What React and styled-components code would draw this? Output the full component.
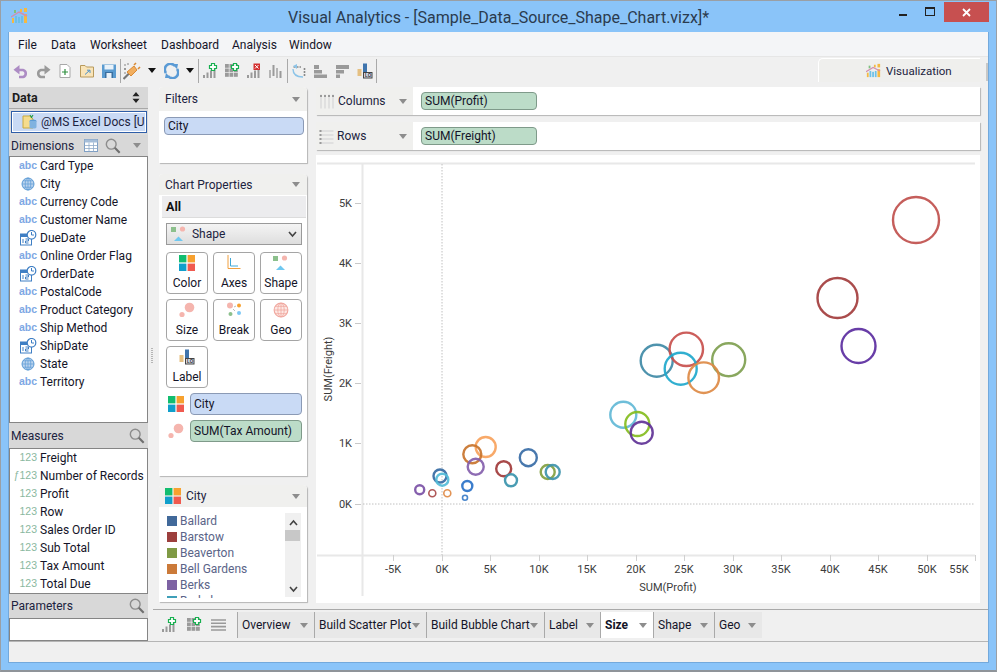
import React from 'react';
import styled, { createGlobalStyle } from 'styled-components';

const Global = createGlobalStyle`
  html, body { margin: 0; padding: 0; background: #8ac4f9; }
  * { box-sizing: border-box; }
`;
const FONT = `Roboto, "Liberation Sans", Arial, sans-serif`;

const Window = styled.div`
  width: 997px; height: 672px; overflow: hidden;
  display: flex; flex-direction: column;
  background: #8ac4f9; border: 1px solid #9a9fa5; border-bottom: 2px solid #8f9499;
  font: 12px ${FONT}; color: #1a1a1a;
`;
const TitleBar = styled.div`
  height: 31px; flex: none; display: grid; grid-template-columns: 140px 1fr 140px; align-items: start;
`;
const AppLogo = styled.div`
  padding: 6px 0 0 10px; height: 31px;
`;
const Title = styled.div`
  font: 16px/33px ${FONT}; color: #2b3b4e; text-align: center; 
`;
const WinButtons = styled.div`
  display: flex; justify-content: flex-end; align-items: flex-start; padding: 1px 7px 0 0;
`;
const WinBtn = styled.div`
  width: ${p => p.$w}px; height: 20px; display: flex; align-items: center; justify-content: center;
  background: ${p => p.$close ? '#c75050' : 'transparent'};
`;
const Inner = styled.div`
  flex: 1; margin: 0 7px 7px 7px; display: flex; flex-direction: column; min-height: 0;
  background: #f0f0f0; border: 1px solid #73a9dc; border-top: none;
`;
const MenuBar = styled.div`
  height: 24px; flex: none; background: #f4f5f7; display: flex; align-items: center; padding: 2px 0 0 9px;
  font-size: 12px; color: #141428;
`;
const MenuItem = styled.span`width: ${p => p.$w}px; flex: none;`;
const Toolbar = styled.div`
  height: 28px; flex: none; display: flex; align-items: center; background: #f0f0f0;
  border-top: 1px solid #e6e6e6; padding-left: 1px;
`;
const ToolSlot = styled.div`
  width: ${p => p.$w || 22}px; height: 22px; flex: none; display: flex; align-items: center; justify-content: center;
`;
const ToolSep = styled.div`
  width: 1px; height: 24px; background: #a9a9a9; flex: none;
`;
const VizTab = styled.div`
  margin-left: auto; width: 162px; height: 24px; align-self: flex-start; margin-top: 1px;
  background: #efefed; border-top: 1px solid #fff; border-left: 1px solid #fff; border-top-left-radius: 5px;
  display: flex; align-items: center; gap: 5px; padding: 0 0 0 47px; font-size: 11.5px; color: #1c2340;
`;
const VizEdge = styled.div`
  width: 2px; height: 18px; background: #c8c8c8; margin-left: 6px; flex: none; align-self: flex-start; margin-top: 6px;
`;
const Main = styled.div`
  flex: 1; display: flex; min-height: 0;
`;
const LeftPanel = styled.div`
  width: 139px; flex: none; display: flex; flex-direction: column; padding-top: 3px;
`;
const DataHeader = styled.div`
  height: 22px; background: #d8d8d8; border-bottom: 1px solid #a8a8a8; display: flex; align-items: center;
  justify-content: space-between; padding: 0 8px 0 3px; font-weight: bold; font-size: 12.5px; color: #1c1c1c;
`;
const SourceRow = styled.div`
  height: 27px; background: #dcdcdc; padding: 2px 1px 2px 2px;
`;
const SourceBox = styled.div`
  height: 22px; border: 1px solid #2f5ea8; background: #c9daf5; outline: 1px solid #fff; outline-offset: -2px;
  display: flex; align-items: center; gap: 3px; padding-left: 10px; font-size: 12px; white-space: nowrap; overflow: hidden; color: #1c2340;
`;
const SectionHeader = styled.div`
  height: ${p => p.$h}px; flex: none; background: #d8d8d8; display: flex; align-items: center; padding: 0 3px 0 2px; font-size: 12px; color: #1c2340;
`;
const SectionLabel = styled.span`flex: 1;`;
const SectionTools = styled.div`display: flex; align-items: center; gap: 7px;`;
const CaretGap = styled.div`margin-left: 5px; margin-right: 4px;`;
const FieldList = styled.div`
  height: ${p => p.$h}px; flex: none; background: #fff; border: 1px solid #858585;
`;
const FieldRow = styled.div`
  height: 18px; display: flex; align-items: center; font-size: 12px; color: #141428; white-space: nowrap;
`;
const FieldIconBox = styled.div`
  width: 30px; flex: none; display: flex; justify-content: flex-end; align-items: center; padding-right: 3px; height: 18px;
`;
const TypeText = styled.span`
  font: ${p => p.$bold ? 'bold' : 'normal'} 10.5px "Liberation Sans", sans-serif; color: ${p => p.$c}; position: relative; top: -1px;
`;
const GlobeGap = styled.div`margin-right: 2px;`;
const Grip = styled.div`
  width: 5px; flex: none; display: flex; align-items: center; justify-content: center;
`;
const GripDots = styled.div`
  width: 2px; height: 16px; margin-left: 3px; margin-bottom: 14px;
  background: repeating-linear-gradient(to bottom, #b5b5b5 0 1px, transparent 1px 2px);
`;
const RightArea = styled.div`
  flex: 1; display: flex; flex-direction: column; min-width: 0;
`;
const Workspace = styled.div`
  height: 522px; flex: none; display: flex; gap: 9px; padding: 3px 8px 0 6px;
`;
const MidCol = styled.div`
  width: 148px; flex: none; display: flex; flex-direction: column;
`;
const Card = styled.div`
  height: ${p => p.$h}px; flex: none; margin-bottom: ${p => p.$mb || 0}px; background: #fff; border-radius: 4px 4px 0 0;
  box-shadow: 1px 1px 1px #b5b5b5; overflow: hidden; display: flex; flex-direction: column;
`;
const CardHeader = styled.div`
  height: ${p => p.$h || 24}px; flex: none; background: #f0f0ee; display: flex; align-items: center; justify-content: space-between;
  padding: 0 7px 0 6px; font-size: 12px; color: #1c2340;
`;
const HeaderLeft = styled.div`display: flex; align-items: center; gap: 2px;`;
const Caret = styled.div`
  width: 0; height: 0; flex: none; border-left: 4px solid transparent; border-right: 4px solid transparent;
  border-top: 5px solid ${p => p.$c || '#8d8d8d'};
`;
const Pill = styled.div`
  height: ${p => p.$h || 18}px; width: ${p => p.$w ? p.$w + 'px' : 'auto'}; flex: ${p => p.$w ? 'none' : '1'};
  background: ${p => p.$green ? '#bcdcc8' : '#c9daf5'}; border: 1px solid ${p => p.$green ? '#7f9a8a' : '#8b9ab5'}; border-radius: 4px;
  display: flex; align-items: center; padding: 0 3px; font-size: 12px; color: #141428; white-space: nowrap;
`;
const FilterBody = styled.div`padding: 6px 3px 0 5px;`;
const AllRow = styled.div`
  height: 22px; margin: 1px 1px 0 3px; flex: none; background: #ececee; border-bottom: 1px solid #dcdcdc; display: flex; align-items: center; padding-left: 4px; font-weight: bold; font-size: 12.5px; color: #111;
`;
const ShapeSelect = styled.div`
  margin: 5px 5px 0 7px; height: 22px; flex: none; border: 1px solid #9a9a9a; background: linear-gradient(#f4f4f4, #dedede);
  display: flex; align-items: center; justify-content: space-between; padding: 0 4px 0 4px; font-size: 12px; color: #1c2340;
`;
const PropGrid = styled.div`
  display: grid; grid-template-columns: repeat(3, 42px); gap: 5px; margin: 7px 5px 0 7px;
`;
const PropButton = styled.div`
  height: 42px; border: 1px solid #a5a5a5; border-radius: 4px; background: #fff; display: flex; flex-direction: column; align-items: center;
  justify-content: space-between; padding: 2px 0 3px; font-size: 12px; line-height: 14px; color: #141428;
`;
const AssignRow = styled.div`
  display: flex; align-items: center; margin: 5px 5px 0 9px; gap: 6px;
`;
const Legend = styled.div`
  flex: 1; display: flex; padding: 6px 6px 0 8px; overflow: hidden; min-height: 0;
`;
const LegendList = styled.div`flex: 1; display: flex; flex-direction: column; overflow: hidden; height: 85px;`;
const LegendItem = styled.div`
  height: 16px; flex: none; display: flex; align-items: center; gap: 3px; font-size: 12px; color: #5a6488;
`;
const Swatch = styled.div`width: 10px; height: 10px; background: ${p => p.$c}; flex: none;`;
const ScrollBar = styled.div`
  width: 16px; height: 84px; flex: none; background: #f0f0f0; display: flex; flex-direction: column; align-items: center; justify-content: space-between; position: relative; padding: 6px 0 4px;
`;
const ScrollThumb = styled.div`
  position: absolute; top: 17px; left: 0; width: 15px; height: 11px; background: #c8c8c8;
`;
const ChartCol = styled.div`
  flex: 1; display: flex; flex-direction: column; min-width: 0;
`;
const Shelf = styled.div`
  height: 28px; flex: none; margin-bottom: ${p => p.$mb}px; background: #fff; display: flex; box-shadow: 1px 1px 1px #b5b5b5; border-radius: 3px 0 0 0;
`;
const ShelfLabel = styled.div`
  width: 97px; flex: none; background: #f0f0ee; display: flex; align-items: center; padding: 0 6px 0 3px; gap: 3px; font-size: 12px; color: #1c2340;
`;
const ShelfName = styled.span`flex: 1;`;
const ShelfBody = styled.div`flex: 1; padding: 5px 8px; display: flex; align-items: flex-start;`;
const ChartPanel = styled.div`
  height: 448px; flex: none; background: #fff;
`;
const ChartSvg = styled.svg`
  display: block; width: 664px; height: 448px;
`;
const AxisLabel = styled.text`
  font: 11px ${FONT}; fill: #3c3c3c;
`;
const TabBar = styled.div`
  height: 33px; flex: none; border-top: 1px solid #a9a9a9; margin-top: 3px; display: flex; align-items: flex-start; padding: 2px 0 0 8px;
`;
const TabIcons = styled.div`
  width: 76px; height: 26px; flex: none; display: flex; align-items: center; gap: 9px;
`;
const Tab = styled.div`
  width: ${p => p.$w}px; height: 26px; flex: none; display: flex; align-items: center; justify-content: space-between;
  background: ${p => p.$active ? '#fff' : '#e8e8e8'}; border-left: 1px solid #a9a9a9; padding: 0 6px 0 4px;
  font-size: 12px; font-weight: ${p => p.$active ? 'bold' : 'normal'}; color: #141428; white-space: nowrap;
`;
const StatusBar = styled.div`
  height: 21px; flex: none; background: #f0f0f0; border-top: 1px solid #b5b5b5;
`;

const Svg = ({ w = 16, h = 16, vb, children }) => (
  <svg width={w} height={h} viewBox={vb || `0 0 ${w} ${h}`} style={{ display: 'block', flex: 'none' }}>{children}</svg>
);

const AppIcon = ({ s = 17 }) => (
  <Svg w={s} h={s} vb="0 0 17 17">
    <rect x="1" y="11" width="2" height="5" fill="#f5b942" /><rect x="4" y="9" width="2" height="7" fill="#6cc0e8" />
    <rect x="7" y="10" width="2" height="6" fill="#6cc0e8" /><rect x="10" y="9" width="2" height="7" fill="#6cc0e8" />
    <rect x="13" y="7" width="3" height="9" fill="#f5b942" /><rect x="13" y="1" width="3" height="4" fill="#f5b942" />
    <rect x="9" y="2" width="2" height="3" fill="#f5b942" /><rect x="3" y="3" width="2" height="3" fill="#7fc27f" />
    <path d="M0 10 L8 5 L16 9" fill="none" stroke="#d08fb0" strokeWidth="1.4" />
  </Svg>
);
const Undo = ({ c }) => (
  <Svg><path d="M4 7 H10 A3.6 3.6 0 0 1 10 14 H6" fill="none" stroke={c} strokeWidth="2.6" /><path d="M6.5 2 V11.5 L0.5 6.8 Z" fill={c} /></Svg>
);
const Redo = ({ c }) => (
  <Svg><path d="M12 7 H6 A3.6 3.6 0 0 0 6 14 H10" fill="none" stroke={c} strokeWidth="2.6" /><path d="M9.5 2 V11.5 L15.5 6.8 Z" fill={c} /></Svg>
);
const NewDoc = () => (
  <Svg><path d="M3 1.5 H10 L13 4.5 V14.5 H3 Z" fill="#fff" stroke="#a8a8a8" /><path d="M8 6 V12 M5 9 H11" stroke="#2f8f3f" strokeWidth="1.2" /></Svg>
);
const Folder = () => (
  <Svg><path d="M1.5 2.5 H6 L7.5 4 H14.5 V14 H1.5 Z" fill="#f9e4b8" stroke="#b89a5c" /><path d="M6 11.5 L10.5 7.5 M8 7.2 H11 V10" fill="none" stroke="#4a90c8" strokeWidth="1" /></Svg>
);
const Save = () => (
  <Svg><rect x="1" y="1.5" width="14" height="13.5" fill="#5a9bd0" /><rect x="3.5" y="2" width="9" height="4.5" fill="#e9f2f9" /><rect x="4" y="9" width="8" height="6" fill="#3a6f9f" /><rect x="5.5" y="10" width="5" height="5" fill="#e9f2f9" /></Svg>
);
const Plug = () => (
  <Svg w={18} h={18}>
    <rect x="1" y="2" width="2" height="2" fill="#bbb" /><rect x="1" y="6" width="2" height="2" fill="#999" /><rect x="4" y="1" width="2" height="2" fill="#bbb" /><rect x="1" y="10" width="2" height="2" fill="#bbb" />
    <path d="M0.5 17 L6 11.5" stroke="#777" strokeWidth="2.2" />
    <path d="M4 10 L11 4 L14 8 L8 14 Z" fill="#f2ae5e" stroke="#d98a35" />
    <path d="M11 3 L13 1 M15 7 L17 5" stroke="#d98a35" strokeWidth="1.6" />
  </Svg>
);
const Refresh = () => (
  <Svg w={15} h={16}>
    <path d="M2 10 A5.5 5.5 0 0 1 11 3 M13 6 A5.5 5.5 0 0 1 4 13" fill="none" stroke="#5b9bd5" strokeWidth="2.6" />
    <path d="M8 1 L14 1 L13 6 Z M7 15 L1 15 L2 10 Z" fill="#5b9bd5" />
  </Svg>
);
const Bars = ({ c = '#9a9a9a' }) => (
  <>
    <rect x="1" y="12" width="2" height="3" fill={c} /><rect x="4.5" y="9.5" width="2" height="5.5" fill={c} />
    <rect x="8" y="7.5" width="2" height="7.5" fill={c} /><rect x="11.5" y="6" width="2" height="9" fill={c} />
  </>
);
const GreenPlus = ({ x = 7, y = 0 }) => (
  <path transform={`translate(${x} ${y})`} d="M2.5 0.5 H5.5 V2.5 H7.5 V5.5 H5.5 V7.5 H2.5 V5.5 H0.5 V2.5 H2.5 Z" fill="#fff" stroke="#18b050" strokeWidth="1.2" />
);
const ChartPlus = () => <Svg><Bars /><GreenPlus /></Svg>;
const GridCells = () => (
  <>
    {[1, 5.5, 10].flatMap(y => [1, 5.5, 10].map(x => <rect key={`${x}-${y}`} x={x} y={y} width="3.8" height="3.8" fill="#9a9a9a" />))}
  </>
);
const GridPlus = () => <Svg><GridCells /><GreenPlus /></Svg>;
const ChartX = () => (
  <Svg><Bars /><path d="M7.5 0.5 H14 V7 H7.5 Z" fill="#d43030" /><path d="M9 2 L12.5 5.5 M12.5 2 L9 5.5" stroke="#fff" strokeWidth="1" /></Svg>
);
const ChartGrey = () => (
  <Svg><rect x="1" y="7" width="2" height="8" fill="#b5b5b5" /><rect x="4.5" y="2" width="2" height="11" fill="#9a9a9a" /><rect x="8" y="5" width="2" height="10" fill="#b5b5b5" /><rect x="11.5" y="8" width="2" height="7" fill="#9a9a9a" /></Svg>
);
const Lasso = () => (
  <Svg><path d="M2.5 4 H10 M13.5 5 V14" stroke="#888" strokeWidth="1.6" strokeDasharray="2 1" fill="none" /><path d="M2 6 C2 12 6 14 12 14" stroke="#8cc4e8" strokeWidth="1.4" fill="none" /><path d="M2 3 L6 1 V6 Z" fill="#8cc4e8" /></Svg>
);
const HBarsA = () => (
  <Svg><rect x="1" y="2" width="5" height="4" fill="#9a9a9a" /><rect x="1" y="7" width="8" height="3.5" fill="#9a9a9a" /><rect x="1" y="11.5" width="13" height="3.5" fill="#9a9a9a" /></Svg>
);
const HBarsB = () => (
  <Svg><rect x="1" y="2" width="13" height="4" fill="#9a9a9a" /><rect x="1" y="7" width="8" height="3.5" fill="#9a9a9a" /><rect x="1" y="11.5" width="4" height="3.5" fill="#9a9a9a" /></Svg>
);
const LabelIcon = () => (
  <Svg w={16} h={16}>
    <rect x="0.5" y="6" width="4" height="7" fill="#e5c082" /><rect x="6" y="0.5" width="4" height="9" fill="#3f74ad" />
    <rect x="6.5" y="9.5" width="8.5" height="5.5" fill="#d4dbe6" stroke="#444" />
    <text x="8" y="14" fontSize="4.5" fontWeight="bold" fill="#333" fontFamily="Liberation Sans">LO</text>
  </Svg>
);
const Quad = () => (
  <Svg w={16} h={16}>
    <rect x="0" y="0" width="7.4" height="7.4" fill="#12bd6f" /><rect x="8.6" y="0" width="7.4" height="7.4" fill="#f7a12f" />
    <rect x="0" y="8.6" width="7.4" height="7.4" fill="#109fcb" /><rect x="8.6" y="8.6" width="7.4" height="7.4" fill="#f05a4f" />
  </Svg>
);
const ShapeIcon = () => (
  <Svg w={16} h={16}>
    <rect x="0" y="1" width="5" height="5" fill="#8cc08c" /><circle cx="11.5" cy="3" r="2.6" fill="#f5b5ae" /><path d="M3 15 L7.5 10.5 L12 15 Z" fill="#6fc8f0" />
  </Svg>
);
const SizeIcon = () => (
  <Svg w={16} h={16}>
    <circle cx="10.5" cy="5.5" r="4.8" fill="#f5b5ae" /><circle cx="3" cy="12.5" r="2.6" fill="#f5b5ae" />
  </Svg>
);
const BreakIcon = () => (
  <Svg w={17} h={16}>
    <circle cx="4" cy="3.5" r="3" fill="#f5b5ae" /><circle cx="13" cy="3.5" r="2" fill="#f7a12f" /><circle cx="4.5" cy="12" r="2" fill="#8cc08c" /><circle cx="13" cy="11" r="2" fill="#7cc8f5" />
    <path d="M8 5 L10 4 M7 7 L9 9" stroke="#aaa" strokeWidth="0.8" />
  </Svg>
);
const Globe = ({ c = '#5b9bd5', fill = '#bcd4ee', s = 14 }) => (
  <Svg w={s} h={s} vb="0 0 14 14">
    <circle cx="7" cy="7" r="6" fill={fill} stroke={c} strokeWidth="1" />
    <ellipse cx="7" cy="7" rx="2.8" ry="6" fill="none" stroke={c} strokeWidth="0.7" />
    <path d="M7 1 V13 M1 7 H13 M2 3.8 H12 M2 10.2 H12" stroke={c} strokeWidth="0.7" />
  </Svg>
);
const AxesIcon = () => (
  <Svg w={14} h={15}>
    <path d="M1 0 V13.5 H13.5" fill="none" stroke="#f0a040" strokeWidth="1" /><path d="M3.5 3 V11 H11" fill="none" stroke="#3fa9d8" strokeWidth="1" />
  </Svg>
);
const DateIcon = () => (
  <Svg w={17} h={16}>
    <rect x="0.5" y="4" width="11" height="11" fill="#fff" stroke="#3f7fc4" /><rect x="0.5" y="4" width="11" height="3" fill="#3f7fc4" />
    <path d="M3 9 V13 M5.5 9 H8.5 V11 H5.5 V13 H8.5" stroke="#3f7fc4" strokeWidth="1" fill="none" />
    <circle cx="11.5" cy="4.8" r="4.3" fill="#fff" stroke="#3f7fc4" strokeWidth="1.2" /><path d="M11.5 2 V5 H14" stroke="#3f7fc4" fill="none" />
  </Svg>
);
const SourceIcon = () => (
  <Svg w={16} h={16}>
    <path d="M1 2 H8 L11 5 V14 H1 Z" fill="#f5dc8c" stroke="#c9a93f" /><path d="M8 1 L10 4 M11 1 L9 4" stroke="#2a9d4a" strokeWidth="1.2" />
    <ellipse cx="11" cy="7" rx="3.5" ry="1.6" fill="#5b9bd5" /><path d="M7.5 7 V13 A3.5 1.6 0 0 0 14.5 13 V7" fill="#7fb2e0" />
  </Svg>
);
const Search = ({ s = 16 }) => (
  <Svg w={s} h={s} vb="0 0 18 18">
    <circle cx="7" cy="7" r="5.5" fill="none" stroke="#8d8d8d" strokeWidth="1.6" /><path d="M11 11 L16.5 16.5" stroke="#6f6f6f" strokeWidth="2.4" />
  </Svg>
);
const TableIcon = () => (
  <Svg w={14} h={13}>
    <rect x="0.5" y="0.5" width="13" height="12" fill="#fff" stroke="#7f9fc4" /><rect x="0.5" y="0.5" width="13" height="3" fill="#a5bdd8" />
    <path d="M0.5 6.5 H13.5 M0.5 9.5 H13.5 M5 3.5 V12.5 M9.5 3.5 V12.5" stroke="#8fa9c8" strokeWidth="0.8" />
  </Svg>
);
const SortArrows = () => (
  <Svg w={8} h={11}><path d="M4 0 L7.5 4.2 H0.5 Z M4 11 L7.5 6.8 H0.5 Z" fill="#222" /></Svg>
);
const ListLines = () => (
  <Svg w={15} h={12}><path d="M0 1 H15 M0 4.3 H15 M0 7.6 H15 M0 11 H15" stroke="#999" strokeWidth="1.6" /></Svg>
);
const ColumnsGrip = () => (
  <Svg w={16} h={15}>
    {[1, 5, 9, 13].map(x => <rect key={x} x={x} y="0.5" width="2" height="14" fill="#e0e0e0" />)}
    {[1, 5, 9, 13].map(x => <rect key={`d${x}`} x={x} y="1" width="2" height="2" fill="#9a9a9a" />)}
  </Svg>
);
const RowsGrip = () => (
  <Svg w={15} h={15}>
    {[1, 5, 9, 13].map(y => <rect key={y} x="0.5" y={y} width="14" height="2" fill="#e0e0e0" />)}
    {[1, 5, 9, 13].map(y => <rect key={`d${y}`} x="0.5" y={y} width="2" height="2" fill="#9a9a9a" />)}
  </Svg>
);
const Chevron = ({ up }) => (
  <Svg w={9} h={7}><path d={up ? 'M1 6 L4.5 2 L8 6' : 'M1 1 L4.5 5 L8 1'} fill="none" stroke="#444" strokeWidth="1.6" /></Svg>
);

const menus = [['File', 33], ['Data', 39], ['Worksheet', 71], ['Dashboard', 71], ['Analysis', 57], ['Window', 60]];
const dims = [
  ['abc', 'Card Type'], ['geo', 'City'], ['abc', 'Currency Code'], ['abc', 'Customer Name'], ['date', 'DueDate'],
  ['abc', 'Online Order Flag'], ['date', 'OrderDate'], ['abc', 'PostalCode'], ['abc', 'Product Category'], ['abc', 'Ship Method'],
  ['date', 'ShipDate'], ['geo', 'State'], ['abc', 'Territory'],
];
const measures = ['Freight', 'Number of Records', 'Profit', 'Row', 'Sales Order ID', 'Sub Total', 'Tax Amount', 'Total Due'];
const legend = [['Ballard', '#41699a'], ['Barstow', '#9c3f3d'], ['Beaverton', '#7f9a45'], ['Bell Gardens', '#cb7a39'], ['Berks', '#7d62a3'], ['Berkeley', '#3f9fb8']];
const tabs = [['Overview', 77], ['Build Scatter Plot', 112], ['Build Bubble Chart', 118], ['Label', 56], ['Size', 53, true], ['Shape', 61], ['Geo', 48]];

const bubbles = [
  [916, 220, 23, '#c0504d'], [837.5, 298, 20, '#a33d3d'], [858.5, 346, 17, '#5b2da0'],
  [656.7, 360.7, 16, '#3f8aa6'], [728.7, 359.7, 16.5, '#7f9f50'], [686.3, 349.3, 16.7, '#c8504d'],
  [680.7, 368.7, 16, '#1fa8cc'], [703.7, 377.7, 15.3, '#dd8a45'],
  [623.3, 414.7, 13, '#62b8d6'], [637.3, 424, 12, '#84bd1e'], [641.7, 432.7, 11, '#5f3296'],
  [485.7, 447, 10, '#f7a25c'], [472.3, 454.3, 9, '#c8742c'], [475.7, 466.7, 8, '#8460ac'], [503.7, 468.7, 7.5, '#a13a3a'],
  [528.3, 457.7, 8.5, '#386ca6'], [547.7, 472, 7, '#82a03f'], [552.7, 472, 7, '#3f94ad'], [511, 480.3, 6, '#3a94ad'],
  [440, 476, 6.5, '#356aa3'], [442.3, 479.7, 6, '#55bcd8'], [467.3, 486, 5, '#2a72c8'], [419.7, 489.7, 4.5, '#7b51a6'],
  [432.3, 493.3, 3.5, '#a84a4a'], [447.3, 493.3, 3.5, '#e08a45'], [465, 497.7, 2.5, '#3a7cc8'],
];
const xTicks = [[-5, 393], [0, 442], [5, 490], [10, 539], [15, 587], [20, 636], [25, 684], [30, 733], [35, 781], [40, 830], [45, 878], [50, 927], [55, 975]];
const yTicks = [[5, 203], [4, 263], [3, 323], [2, 383], [1, 443], [0, 504]];

const Chart = () => (
  <ChartSvg viewBox="316 155 664 448">
    <path d="M317 163.5 H975 M317 555.5 H975 M362.5 164 V596" stroke="#e8e8e8" strokeWidth="2" fill="none" />
    <path d="M442 164 V555 M363 504 H975" stroke="#c0c0c0" strokeWidth="1" strokeDasharray="1.5 1.5" fill="none" />
    {yTicks.map(([v, y]) => (
      <g key={v}>
        <path d={`M355 ${y}.5 H361`} stroke="#c8c8c8" />
        <AxisLabel x="352" y={y + 4} textAnchor="end">{v}K</AxisLabel>
      </g>
    ))}
    {xTicks.map(([v, x]) => (
      <g key={v}>
        <path d={`M${x}.5 555 V561`} stroke="#d0d0d0" />
        <AxisLabel x={v === 55 ? 959 : x} y="573" textAnchor="middle">{v}K</AxisLabel>
      </g>
    ))}
    <AxisLabel x="668" y="591" textAnchor="middle">SUM(Profit)</AxisLabel>
    <AxisLabel x="332" y="369" textAnchor="middle" transform="rotate(-90 332 369)">SUM(Freight)</AxisLabel>
    {bubbles.map(([x, y, r, c], i) => (
      <circle key={i} cx={x} cy={y} r={r} fill="none" stroke={c} strokeWidth={r < 4 ? 1.6 : 2.4} strokeOpacity="0.92" />
    ))}
  </ChartSvg>
);

const Field = ({ type, name }) => (
  <FieldRow>
    <FieldIconBox>
      {type === 'abc' && <TypeText $c="#7ea8e4" $bold>abc</TypeText>}
      {type === 'geo' && <GlobeGap><Globe /></GlobeGap>}
      {type === 'date' && <DateIcon />}
      {type === 'num' && <TypeText $c="#8ab8a0">123</TypeText>}
      {type === 'calc' && <TypeText $c="#8ab8a0">ƒ123</TypeText>}
    </FieldIconBox>
    <span>{name}</span>
  </FieldRow>
);

const PropBtn = ({ icon, label }) => <PropButton>{icon}<span>{label}</span></PropButton>;

export default function App() {
  return (
    <Window>
      <Global />
      <TitleBar>
        <AppLogo><AppIcon /></AppLogo>
        <Title>Visual Analytics - [Sample_Data_Source_Shape_Chart.vizx]*</Title>
        <WinButtons>
          <WinBtn $w={27}><Svg w={9} h={9}><rect x="0" y="6" width="8" height="2" fill="#222" /></Svg></WinBtn>
          <WinBtn $w={27}><Svg w={11} h={10}><rect x="0.5" y="0.5" width="9" height="8" fill="none" stroke="#222" /><rect x="0" y="0" width="10" height="2" fill="#222" /></Svg></WinBtn>
          <WinBtn $w={45} $close><Svg w={9} h={9}><path d="M1 1 L8 8 M8 1 L1 8" stroke="#fff" strokeWidth="1.8" /></Svg></WinBtn>
        </WinButtons>
      </TitleBar>
      <Inner>
        <MenuBar>
          {menus.map(([m, w]) => <MenuItem key={m} $w={w}>{m}</MenuItem>)}
        </MenuBar>
        <Toolbar>
          <ToolSlot><Undo c="#ad8cc4" /></ToolSlot>
          <ToolSlot><Redo c="#9a9a9a" /></ToolSlot>
          <ToolSlot><NewDoc /></ToolSlot>
          <ToolSlot><Folder /></ToolSlot>
          <ToolSlot><Save /></ToolSlot>
          <ToolSep />
          <ToolSlot><Plug /></ToolSlot>
          <ToolSlot $w={17}><Caret $c="#111" /></ToolSlot>
          <ToolSlot><Refresh /></ToolSlot>
          <ToolSlot $w={16}><Caret $c="#111" /></ToolSlot>
          <ToolSep />
          <ToolSlot><ChartPlus /></ToolSlot>
          <ToolSlot><GridPlus /></ToolSlot>
          <ToolSlot><ChartX /></ToolSlot>
          <ToolSlot><ChartGrey /></ToolSlot>
          <ToolSep />
          <ToolSlot><Lasso /></ToolSlot>
          <ToolSlot><HBarsA /></ToolSlot>
          <ToolSlot><HBarsB /></ToolSlot>
          <ToolSlot><LabelIcon /></ToolSlot>
          <ToolSep />
          <VizTab><AppIcon s={15} /><span>Visualization</span></VizTab>
          <VizEdge />
        </Toolbar>
        <Main>
          <LeftPanel>
            <DataHeader>Data<SortArrows /></DataHeader>
            <SourceRow><SourceBox><SourceIcon /><span>@MS Excel Docs [U...</span></SourceBox></SourceRow>
            <SectionHeader $h={21}>
              <SectionLabel>Dimensions</SectionLabel>
              <SectionTools><TableIcon /><Search /><CaretGap><Caret /></CaretGap></SectionTools>
            </SectionHeader>
            <FieldList $h={267}>
              {dims.map(([t, n]) => <Field key={n} type={t} name={n} />)}
            </FieldList>
            <SectionHeader $h={25}>
              <SectionLabel>Measures</SectionLabel>
              <Search />
            </SectionHeader>
            <FieldList $h={146}>
              {measures.map((n, i) => <Field key={n} type={i === 1 ? 'calc' : 'num'} name={n} />)}
            </FieldList>
            <SectionHeader $h={24}>
              <SectionLabel>Parameters</SectionLabel>
              <Search />
            </SectionHeader>
            <FieldList $h={23} />
          </LeftPanel>
          <Grip><GripDots /></Grip>
          <RightArea>
            <Workspace>
              <MidCol>
                <Card $h={76} $mb={11}>
                  <CardHeader $h={24}>Filters<Caret /></CardHeader>
                  <FilterBody><Pill>City</Pill></FilterBody>
                </Card>
                <Card $h={302} $mb={9}>
                  <CardHeader $h={21}>Chart Properties<Caret /></CardHeader>
                  <AllRow>All</AllRow>
                  <ShapeSelect>
                    <HeaderLeft><ShapeIcon /><span>&nbsp;Shape</span></HeaderLeft>
                    <Chevron />
                  </ShapeSelect>
                  <PropGrid>
                    <PropBtn icon={<Quad />} label="Color" />
                    <PropBtn icon={<AxesIcon />} label="Axes" />
                    <PropBtn icon={<ShapeIcon />} label="Shape" />
                    <PropBtn icon={<SizeIcon />} label="Size" />
                    <PropBtn icon={<BreakIcon />} label="Break" />
                    <PropBtn icon={<Globe c="#f0a8a0" fill="#fde8e4" s={16} />} label="Geo" />
                    <PropBtn icon={<LabelIcon />} label="Label" />
                  </PropGrid>
                  <AssignRow><Quad /><Pill $h={22}>City</Pill></AssignRow>
                  <AssignRow><SizeIcon /><Pill $h={22} $green>SUM(Tax Amount)</Pill></AssignRow>
                </Card>
                <Card $h={117}>
                  <CardHeader $h={22}>
                    <HeaderLeft><Quad /><span>&nbsp;City</span></HeaderLeft><Caret />
                  </CardHeader>
                  <Legend>
                    <LegendList>
                      {legend.map(([n, c]) => <LegendItem key={n}><Swatch $c={c} /><span>{n}</span></LegendItem>)}
                    </LegendList>
                    <ScrollBar>
                      <Chevron up />
                      <ScrollThumb />
                      <Chevron />
                    </ScrollBar>
                  </Legend>
                </Card>
              </MidCol>
              <ChartCol>
                <Shelf $mb={7}>
                  <ShelfLabel><ColumnsGrip /><ShelfName>Columns</ShelfName><Caret /></ShelfLabel>
                  <ShelfBody><Pill $w={116} $green>SUM(Profit)</Pill></ShelfBody>
                </Shelf>
                <Shelf $mb={5}>
                  <ShelfLabel><RowsGrip /><ShelfName>Rows</ShelfName><Caret /></ShelfLabel>
                  <ShelfBody><Pill $w={116} $green>SUM(Freight)</Pill></ShelfBody>
                </Shelf>
                <ChartPanel><Chart /></ChartPanel>
              </ChartCol>
            </Workspace>
            <TabBar>
              <TabIcons>
                <ChartPlus /><GridPlus /><ListLines />
              </TabIcons>
              {tabs.map(([n, w, a]) => (
                <Tab key={n} $w={w} $active={a}><span>{n}</span><Caret /></Tab>
              ))}
            </TabBar>
          </RightArea>
        </Main>
        <StatusBar />
      </Inner>
    </Window>
  );
}
